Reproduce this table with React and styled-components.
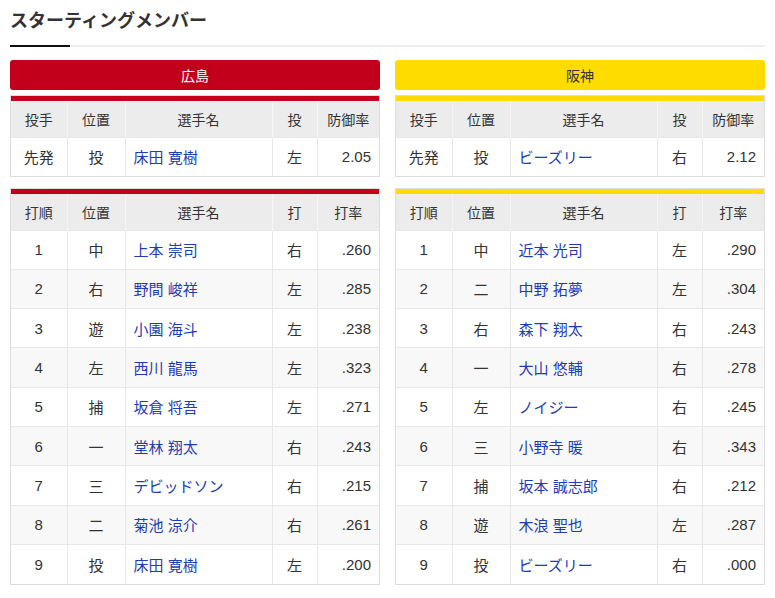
import styled, { createGlobalStyle } from "styled-components";

const teams = [
  {
    name: "広島",
    color: "#c3001b",
    text: "#fff",
    pitcher: { role: "先発", pos: "投", name: "床田 寛樹", hand: "左", era: "2.05" },
    batters: [
      ["1", "中", "上本 崇司", "右", ".260"],
      ["2", "右", "野間 峻祥", "左", ".285"],
      ["3", "遊", "小園 海斗", "左", ".238"],
      ["4", "左", "西川 龍馬", "左", ".323"],
      ["5", "捕", "坂倉 将吾", "左", ".271"],
      ["6", "一", "堂林 翔太", "右", ".243"],
      ["7", "三", "デビッドソン", "右", ".215"],
      ["8", "二", "菊池 涼介", "右", ".261"],
      ["9", "投", "床田 寛樹", "左", ".200"],
    ],
  },
  {
    name: "阪神",
    color: "#ffdc00",
    text: "#333",
    pitcher: { role: "先発", pos: "投", name: "ビーズリー", hand: "右", era: "2.12" },
    batters: [
      ["1", "中", "近本 光司", "左", ".290"],
      ["2", "二", "中野 拓夢", "左", ".304"],
      ["3", "右", "森下 翔太", "右", ".243"],
      ["4", "一", "大山 悠輔", "右", ".278"],
      ["5", "左", "ノイジー", "右", ".245"],
      ["6", "三", "小野寺 暖", "右", ".343"],
      ["7", "捕", "坂本 誠志郎", "右", ".212"],
      ["8", "遊", "木浪 聖也", "左", ".287"],
      ["9", "投", "ビーズリー", "右", ".000"],
    ],
  },
];

function LineupTable({ color, heads, rows, rowHeight }) {
  return (
    <TableBox $color={color}>
      <Table>
        <colgroup>
          <col style={{ width: 56 }} />
          <col style={{ width: 58 }} />
          <col style={{ width: 147 }} />
          <col style={{ width: 45 }} />
          <col />
        </colgroup>
        <thead>
          <tr>
            {heads.map((h) => (
              <Th key={h}>{h}</Th>
            ))}
          </tr>
        </thead>
        <tbody>
          {rows.map((r, i) => (
            <Row key={i} $h={rowHeight}>
              <Td>{r[0]}</Td>
              <Td>{r[1]}</Td>
              <NameTd>{r[2]}</NameTd>
              <Td>{r[3]}</Td>
              <NumTd>{r[4]}</NumTd>
            </Row>
          ))}
        </tbody>
      </Table>
    </TableBox>
  );
}

export default function App() {
  return (
    <>
      <GlobalStyle />
      <Page>
        <Title>スターティングメンバー</Title>
        <TitleRule />
        <Columns>
          {teams.map((t) => (
            <Column key={t.name}>
              <TeamBar $bg={t.color} $fg={t.text}>
                {t.name}
              </TeamBar>
              <LineupTable
                color={t.color}
                heads={["投手", "位置", "選手名", "投", "防御率"]}
                rows={[[t.pitcher.role, t.pitcher.pos, t.pitcher.name, t.pitcher.hand, t.pitcher.era]]}
                rowHeight={38}
              />
              <Spacer />
              <LineupTable
                color={t.color}
                heads={["打順", "位置", "選手名", "打", "打率"]}
                rows={t.batters}
                rowHeight={39.3}
              />
            </Column>
          ))}
        </Columns>
      </Page>
    </>
  );
}

const GlobalStyle = createGlobalStyle`
  body {
    margin: 0;
    background: #fff;
    color: #333;
    font-family: "Liberation Sans", "Noto Sans CJK JP", sans-serif;
  }
`;

const Page = styled.div`
  width: 775px;
  padding: 8px 10px 0;
  box-sizing: border-box;
`;

const Title = styled.h2`
  margin: 0;
  font-size: 18px;
  line-height: 26px;
  font-weight: bold;
  color: #333;
`;

const TitleRule = styled.div`
  margin-top: 11px;
  height: 2px;
  background: linear-gradient(to right, #111 60px, #eee 60px);
`;

const Columns = styled.div`
  display: grid;
  grid-template-columns: 370px 370px;
  column-gap: 15px;
  margin-top: 13px;
`;

const Column = styled.div`
  display: flex;
  flex-direction: column;
`;

const TeamBar = styled.div`
  height: 30px;
  border-radius: 3px;
  background: ${({ $bg }) => $bg};
  color: ${({ $fg }) => $fg};
  font-size: 14px;
  display: flex;
  align-items: center;
  justify-content: center;
  margin-bottom: 5px;
`;

const Spacer = styled.div`
  height: 11px;
`;

const TableBox = styled.div`
  border: 1px solid #ddd;
  box-shadow: inset 0 5px 0 ${({ $color }) => $color};
  padding-top: 5px;
`;

const Table = styled.table`
  width: 100%;
  border-collapse: collapse;
  table-layout: fixed;
`;

const Th = styled.th`
  height: 36px;
  padding: 0;
  background: #ececec;
  font-weight: normal;
  font-size: 14px;
  color: #333;
  text-align: center;
  border-left: 1px solid #f5f5f5;
  &:first-child {
    border-left: none;
  }
`;

const Row = styled.tr`
  height: ${({ $h }) => $h}px;
  &:nth-child(even) {
    background: #f8f8f8;
  }
`;

const Td = styled.td`
  padding: 0 8px;
  font-size: 15px;
  color: #333;
  text-align: center;
  border-top: 1px solid #e8e8e8;
  border-left: 1px solid #e8e8e8;
  white-space: nowrap;
  &:first-child {
    border-left: none;
  }
`;

const NameTd = styled(Td)`
  text-align: left;
  color: #1e3cb4;
`;

const NumTd = styled(Td)`
  text-align: right;
`;
